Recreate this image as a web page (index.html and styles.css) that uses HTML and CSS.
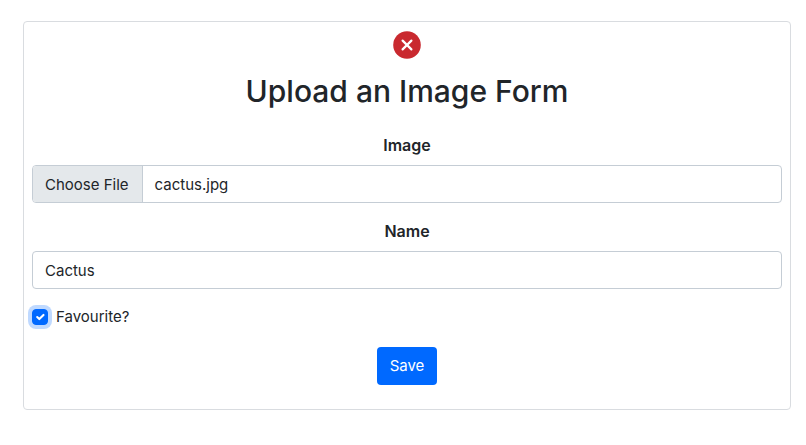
FILE: index.html
```html
<!DOCTYPE html>
<html lang="en">
<head>
  <meta charset="utf-8">
  <meta name="viewport" content="width=device-width, initial-scale=1">
  <title>Upload an Image Form</title>
  <link rel="stylesheet" href="styles.css">
</head>
<body>
  <main class="card">
    <button class="close" type="button" aria-label="Close">
      <svg viewBox="0 0 28 28" width="28" height="28" aria-hidden="true">
        <circle cx="14" cy="14" r="13.8" fill="#c9292f"/>
        <path d="M9.6 9.6l8.8 8.8M18.4 9.6l-8.8 8.8" stroke="#fff" stroke-width="2.2" stroke-linecap="round"/>
      </svg>
    </button>
    <h1 class="title">Upload an Image Form</h1>
    <form class="form">
      <div class="field">
        <label class="label" for="image">Image</label>
        <div class="control file">
          <span class="file-button">Choose File</span>
          <span class="file-name">cactus.jpg</span>
          <input class="file-input" id="image" type="file" accept="image/*">
        </div>
      </div>
      <div class="field">
        <label class="label" for="name">Name</label>
        <input class="control text" id="name" type="text" value="Cactus">
      </div>
      <div class="check">
        <input class="checkbox" id="favourite" type="checkbox" checked>
        <label for="favourite">Favourite?</label>
      </div>
      <button class="save" type="submit">Save</button>
    </form>
  </main>
</body>
</html>
```
FILE: styles.css
```css
* {
  box-sizing: border-box;
}

body {
  margin: 0;
  padding: 21px 15px 21px 23px;
  background: #fff;
  color: #212529;
  font: 400 15px/24px Inter, "Liberation Sans", sans-serif;
}

.card {
  display: flex;
  flex-direction: column;
  align-items: center;
  padding: 9px 8px 24px;
  border: 1px solid #d9dce0;
  border-radius: 4px;
}

.close {
  display: flex;
  padding: 0;
  border: 0;
  background: none;
  cursor: pointer;
}

.title {
  margin: 13px 0 23px;
  font-size: 30px;
  font-weight: 500;
  line-height: 38px;
}

.form {
  display: flex;
  flex-direction: column;
  gap: 16px;
  width: 100%;
}

.field {
  display: flex;
  flex-direction: column;
  gap: 8px;
}

.label {
  align-self: center;
  font-size: 16px;
  font-weight: 600;
}

.control {
  width: 100%;
  height: 38px;
  border: 1px solid #c5cdd5;
  border-radius: 4px;
  background: #fff;
  color: inherit;
  font: inherit;
}

.text {
  padding: 6px 12px;
}

.file {
  position: relative;
  display: flex;
  overflow: hidden;
}

.file-button {
  padding: 7px 13px 5px 12px;
  border-right: 1px solid #c5cdd5;
  background: #e4e8eb;
}

.file-name {
  padding: 7px 12px 5px;
}

.file-input {
  position: absolute;
  inset: 0;
  width: 100%;
  opacity: 0;
  cursor: pointer;
}

.check {
  display: flex;
  align-items: center;
  gap: 8px;
}

.checkbox {
  appearance: none;
  width: 16px;
  height: 16px;
  margin: 0;
  border: 1px solid #b5bcc3;
  border-radius: 4px;
}

.checkbox:checked {
  border-color: #0069ff;
  background: #0069ff url("data:image/svg+xml,%3Csvg xmlns='http://www.w3.org/2000/svg' viewBox='0 0 20 20'%3E%3Cpath fill='none' stroke='%23fff' stroke-linecap='round' stroke-linejoin='round' stroke-width='3' d='M6 10l3 3 6-6'/%3E%3C/svg%3E") center / contain no-repeat;
  box-shadow: 0 0 0 4px #bfd9ff;
}

.save {
  align-self: center;
  margin-top: 2px;
  padding: 7px 13px;
  border: 0;
  border-radius: 4px;
  background: #0069ff;
  color: #fff;
  font: inherit;
  cursor: pointer;
}
```
